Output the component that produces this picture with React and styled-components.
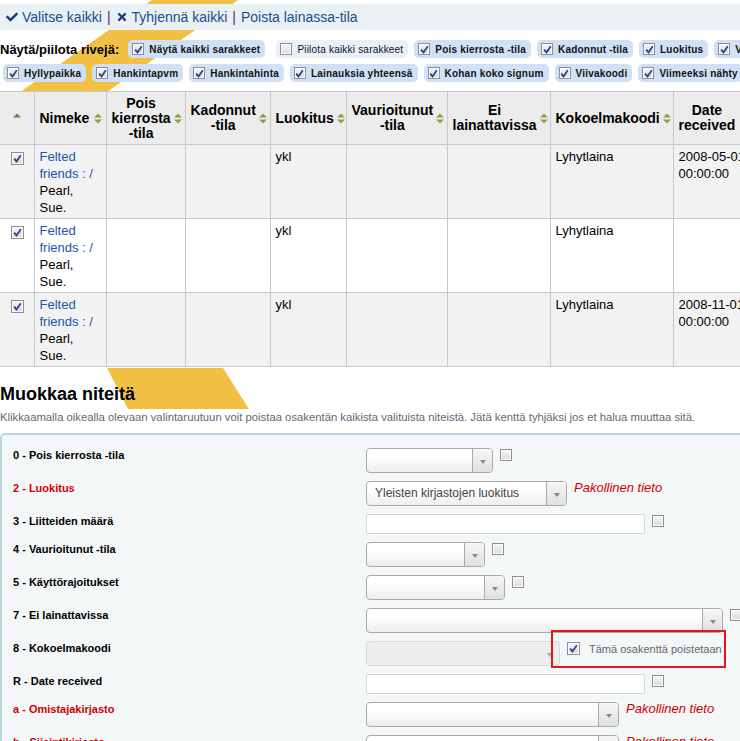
import React from 'react';
import styled, { createGlobalStyle } from 'styled-components';
import { FaCheck, FaTimes } from 'react-icons/fa';

const GlobalStyle = createGlobalStyle`
  html, body {
    margin: 0;
    padding: 0;
    overflow: hidden;
    background: #fff;
  }
  body {
    font-family: 'Liberation Sans', Arial, sans-serif;
    color: #000;
  }
`;

const Page = styled.div`
  position: relative;
  width: 740px;
  height: 741px;
  overflow: hidden;
`;

const Highlight = styled.svg`
  position: absolute;
  left: 0;
  top: 0;
  z-index: 0;
`;

const Content = styled.div`
  position: relative;
  z-index: 1;
  padding-top: 4px;
`;

const ActionBar = styled.div`
  width: 1100px;
  height: 26px;
  background: #e9f1f4;
  display: flex;
  align-items: center;
  padding-left: 6px;
  font-size: 14px;
  color: #1b4d8c;
  white-space: nowrap;
`;

const ActionLink = styled.span`
  display: inline-flex;
  align-items: center;
  gap: 4px;
  svg {
    color: #173f74;
    font-size: 12px;
  }
`;

const Sep = styled.span`
  color: #5a2a58;
  margin: 0 5px;
`;

const ToggleArea = styled.div`
  margin-top: 10px;
  display: flex;
  flex-direction: column;
  gap: 6px;
`;

const ToggleRow = styled.div`
  display: flex;
  align-items: center;
  white-space: nowrap;
`;

const ToggleLabel = styled.span`
  font-weight: bold;
  font-size: 13px;
  margin-right: 6px;
`;

const Chip = styled.span`
  display: inline-flex;
  align-items: center;
  gap: 5px;
  height: 18px;
  padding: 0 5px 0 4px;
  margin: 0 ${(p) => p.$extra || 3}px 0 3px;
  border-radius: 5px;
  background: ${(p) => (p.$light ? '#e8f0fb' : '#d0e1f7')};
  font-size: 10px;
  font-weight: ${(p) => (p.$light ? 'normal' : 'bold')};
  letter-spacing: 0.2px;
  color: #111;
`;

const Box = styled.span`
  display: inline-flex;
  align-items: center;
  justify-content: center;
  width: ${(p) => p.$size || 13}px;
  height: ${(p) => p.$size || 13}px;
  box-sizing: border-box;
  border: 1px solid #8e8f8f;
  background: linear-gradient(#f6f6f6, #dadada);
  box-shadow: inset 0 0 0 1px #fdfdfd;
  flex-shrink: 0;
  vertical-align: middle;
`;

const Checkbox = ({ checked, size }) => (
  <Box $size={size}>
    {checked && (
      <svg width="9" height="9" viewBox="0 0 9 9">
        <path d="M1.2 4.6 L3.5 7.4 L7.8 1.2" fill="none" stroke="#2f4296" strokeWidth="1.8" />
      </svg>
    )}
  </Box>
);

const Table = styled.table`
  margin-top: 9px;
  border-collapse: collapse;
  table-layout: fixed;
  width: 768px;
  font-size: 13px;
`;

const Th = styled.th`
  background: #ececec;
  border: 1px solid #c8c8c8;
  border-left: ${(p) => (p.$first ? 'none' : '1px solid #c8c8c8')};
  padding: 3px 4px 3px 5px;
  height: 46px;
  font-size: 14px;
  font-weight: bold;
  line-height: 15px;
`;

const HeadInner = styled.div`
  display: flex;
  align-items: center;
  justify-content: ${(p) => (p.$center ? 'center' : 'space-between')};
  gap: 3px;
  span {
    text-align: center;
  }
`;

const Td = styled.td`
  background: ${(p) => (p.$odd ? '#f2f2f2' : '#fff')};
  border: 1px solid #c8c8c8;
  border-left: ${(p) => (p.$first ? 'none' : '1px solid #c8c8c8')};
  vertical-align: top;
  padding: 3px 4px 2px 5px;
  line-height: 17px;
  text-align: ${(p) => (p.$center ? 'center' : 'left')};
`;

const BoxCell = styled.div`
  padding-top: 3px;
  line-height: 13px;
`;

const TitleLink = styled.span`
  color: #1f55ad;
`;

const SortIcon = ({ upOnly }) => (
  <svg width="8" height="11" viewBox="0 0 8 11" style={{ flexShrink: 0 }}>
    <path d="M0 4.5 L4 0.5 L8 4.5 Z" fill={upOnly ? '#7a7a4a' : '#9a9a4e'} />
    {!upOnly && <path d="M0 6.5 L4 10.5 L8 6.5 Z" fill="#9a9a4e" />}
  </svg>
);

const Heading = styled.h2`
  margin: 16px 0 5px;
  font-size: 18px;
  line-height: 22px;
  font-weight: bold;
`;

const Hint = styled.p`
  margin: 0;
  font-size: 11.3px;
  line-height: 14px;
  color: #6b6473;
  white-space: nowrap;
`;

const FormBox = styled.div`
  margin-top: 9px;
  width: 900px;
  background: #f3f7f8;
  border-top: 2px solid #b9d7dc;
  border-left: 2px solid #b9d7dc;
  border-top-left-radius: 5px;
  padding: 9px 0 0 11px;
`;

const FieldRow = styled.div`
  display: flex;
  align-items: flex-start;
  padding: 4px 0;
`;

const FieldLabel = styled.div`
  width: 353px;
  flex-shrink: 0;
  font-size: 11px;
  font-weight: bold;
  line-height: 14px;
  color: ${(p) => (p.$required ? '#d10000' : '#000')};
`;

const SelectBox = styled.div`
  width: ${(p) => p.$width}px;
  height: 25px;
  box-sizing: border-box;
  display: flex;
  border: 1px solid ${(p) => (p.$disabled ? '#d8d8d8' : '#aaa')};
  border-radius: 4px;
  background: ${(p) => (p.$disabled ? '#eeeeee' : 'linear-gradient(#ffffff 30%, #eeeeee)')};
  flex-shrink: 0;
`;

const SelectValue = styled.div`
  flex: 1;
  padding-left: 8px;
  font-size: 12px;
  line-height: 23px;
  color: #444;
  white-space: nowrap;
  overflow: hidden;
`;

const SelectArrow = styled.div`
  width: 20px;
  border-left: 1px solid ${(p) => (p.$disabled ? 'transparent' : '#aaa')};
  border-radius: 0 3px 3px 0;
  background: ${(p) => (p.$disabled ? 'transparent' : 'linear-gradient(#f6f6f6, #e0e0e0)')};
  display: flex;
  align-items: center;
  justify-content: center;
  padding-top: 3px;
  box-sizing: border-box;
  &::after {
    content: '';
    border-left: 3.5px solid transparent;
    border-right: 3.5px solid transparent;
    border-top: 4px solid ${(p) => (p.$disabled ? '#aaa' : '#888')};
  }
`;

const TextInput = styled.div`
  width: ${(p) => p.$width}px;
  height: 20px;
  box-sizing: border-box;
  border: 1px solid #d2d8dc;
  border-radius: 2px;
  background: #fff;
  flex-shrink: 0;
`;

const Side = styled.div`
  margin-left: 7px;
  margin-top: 1px;
  display: flex;
  align-items: center;
  gap: 9px;
`;

const Required = styled.span`
  margin-left: 7px;
  font-size: 13px;
  font-style: italic;
  color: #d10000;
  line-height: 14px;
  white-space: nowrap;
`;

const Deleted = styled.div`
  position: relative;
  margin-left: 7px;
  margin-top: 1px;
  display: flex;
  align-items: center;
  gap: 9px;
  font-size: 11px;
  color: #666;
  white-space: nowrap;
  &::before {
    content: '';
    position: absolute;
    left: -16px;
    top: -12px;
    width: 175px;
    height: 38px;
    border: 2px solid #e4161b;
    box-sizing: border-box;
  }
`;

const columns = [
  { key: 'cb', label: '', w: 34 },
  { key: 'title', label: 'Nimeke', w: 72 },
  { key: 'pois', label: ['Pois', 'kierrosta', '-tila'], w: 79 },
  { key: 'kad', label: ['Kadonnut', '-tila'], w: 85 },
  { key: 'luok', label: 'Luokitus', w: 76 },
  { key: 'vaur', label: ['Vaurioitunut', '-tila'], w: 101 },
  { key: 'ei', label: ['Ei', 'lainattavissa'], w: 103 },
  { key: 'koko', label: 'Kokoelmakoodi', w: 123 },
  { key: 'date', label: ['Date', 'received'], w: 95 },
];

const rows = [
  { date: ['2008-05-01', '00:00:00'] },
  { date: null },
  { date: ['2008-11-01', '00:00:00'] },
];

const chipsTop = [
  { label: 'Näytä kaikki sarakkeet', checked: true, extra: 8 },
  { label: 'Piilota kaikki sarakkeet', light: true },
  { label: 'Pois kierrosta -tila', checked: true },
  { label: 'Kadonnut -tila', checked: true },
  { label: 'Luokitus', checked: true },
  { label: 'Vaurioitunut -tila', checked: true },
  { label: 'Ei lainattavissa', checked: true },
];

const chipsBottom = [
  'Hyllypaikka',
  'Hankintapvm',
  'Hankintahinta',
  'Lainauksia yhteensä',
  'Kohan koko signum',
  'Viivakoodi',
  'Viimeeksi nähty',
];

const fields = [
  { label: '0 - Pois kierrosta -tila', type: 'select', w: 127, cb: true },
  { label: '2 - Luokitus', type: 'select', w: 201, req: true, value: 'Yleisten kirjastojen luokitus' },
  { label: '3 - Liitteiden määrä', type: 'input', w: 279, cb: true },
  { label: '4 - Vaurioitunut -tila', type: 'select', w: 119, cb: true },
  { label: '5 - Käyttörajoitukset', type: 'select', w: 139, cb: true },
  { label: '7 - Ei lainattavissa', type: 'select', w: 357, cb: true },
  { label: '8 - Kokoelmakoodi', type: 'select', w: 194, disabled: true, deleted: true },
  { label: 'R - Date received', type: 'input', w: 279, cb: true },
  { label: 'a - Omistajakirjasto', type: 'select', w: 253, req: true },
  { label: 'b - Sijaintikirjasto', type: 'select', w: 253, req: true },
];

const HeadLabel = ({ label }) =>
  Array.isArray(label) ? (
    <span>
      {label.map((l, i) => (
        <React.Fragment key={i}>
          {i > 0 && <br />}
          {l}
        </React.Fragment>
      ))}
    </span>
  ) : (
    <span>{label}</span>
  );

export default function App() {
  return (
    <Page>
      <GlobalStyle />
      <Highlight width="740" height="741">
        <polygon points="152,0 238,0 107,92 20,92" fill="#f2c045" />
        <polygon points="107,368 223,368 249,409 128,409" fill="#f2c045" />
      </Highlight>
      <Content>
        <ActionBar>
          <ActionLink>
            <FaCheck /> Valitse kaikki
          </ActionLink>
          <Sep>|</Sep>
          <ActionLink>
            <FaTimes /> Tyhjennä kaikki
          </ActionLink>
          <Sep>|</Sep>
          <ActionLink>Poista lainassa-tila</ActionLink>
        </ActionBar>

        <ToggleArea>
          <ToggleRow>
            <ToggleLabel>Näytä/piilota rivejä:</ToggleLabel>
            {chipsTop.map((c) => (
              <Chip key={c.label} $light={c.light} $extra={c.extra}>
                <Checkbox checked={c.checked} size={12} />
                {c.label}
              </Chip>
            ))}
          </ToggleRow>
          <ToggleRow>
            {chipsBottom.map((c) => (
              <Chip key={c}>
                <Checkbox checked size={12} />
                {c}
              </Chip>
            ))}
          </ToggleRow>
        </ToggleArea>

        <Table>
          <colgroup>
            {columns.map((c) => (
              <col key={c.key} style={{ width: c.w }} />
            ))}
          </colgroup>
          <thead>
            <tr>
              {columns.map((c, i) => (
                <Th key={c.key} $first={i === 0}>
                  {i === 0 ? (
                    <HeadInner $center>
                      <SortIcon upOnly />
                    </HeadInner>
                  ) : (
                    <HeadInner>
                      <HeadLabel label={c.label} />
                      <SortIcon />
                    </HeadInner>
                  )}
                </Th>
              ))}
            </tr>
          </thead>
          <tbody>
            {rows.map((r, i) => {
              const odd = i % 2 === 0;
              return (
                <tr key={i}>
                  <Td $odd={odd} $first $center>
                    <BoxCell>
                      <Checkbox checked />
                    </BoxCell>
                  </Td>
                  <Td $odd={odd}>
                    <TitleLink>Felted friends : /</TitleLink> Pearl, Sue.
                  </Td>
                  <Td $odd={odd} />
                  <Td $odd={odd} />
                  <Td $odd={odd}>ykl</Td>
                  <Td $odd={odd} />
                  <Td $odd={odd} />
                  <Td $odd={odd}>Lyhytlaina</Td>
                  <Td $odd={odd}>
                    {r.date && (
                      <>
                        {r.date[0]}
                        <br />
                        {r.date[1]}
                      </>
                    )}
                  </Td>
                </tr>
              );
            })}
          </tbody>
        </Table>

        <Heading>Muokkaa niteitä</Heading>
        <Hint>
          Klikkaamalla oikealla olevaan valintaruutuun voit poistaa osakentän kaikista valituista niteistä.
          Jätä kenttä tyhjäksi jos et halua muuttaa sitä.
        </Hint>

        <FormBox>
          {fields.map((f) => (
            <FieldRow key={f.label}>
              <FieldLabel $required={f.req}>{f.label}</FieldLabel>
              {f.type === 'select' ? (
                <SelectBox $width={f.w} $disabled={f.disabled}>
                  <SelectValue>{f.value}</SelectValue>
                  <SelectArrow $disabled={f.disabled} />
                </SelectBox>
              ) : (
                <TextInput $width={f.w} />
              )}
              {f.cb && (
                <Side>
                  <Checkbox size={12} />
                </Side>
              )}
              {f.req && <Required>Pakollinen tieto</Required>}
              {f.deleted && (
                <Deleted>
                  <Checkbox checked />
                  Tämä osakenttä poistetaan
                </Deleted>
              )}
            </FieldRow>
          ))}
        </FormBox>
      </Content>
    </Page>
  );
}
